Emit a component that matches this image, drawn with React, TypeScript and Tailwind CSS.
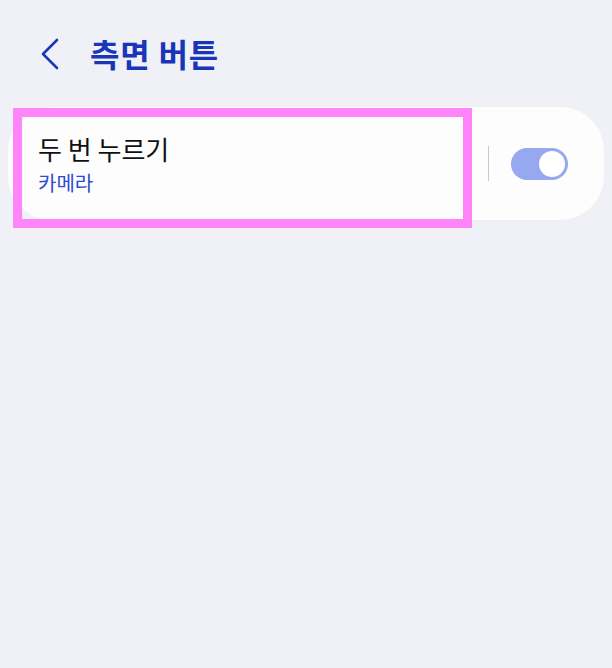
export default function App() {
  return (
    <div
      className="relative min-h-[668px] w-full bg-[#f0f1f6]"
      style={{ fontFamily: '"Noto Sans CJK KR", "Noto Sans", sans-serif' }}
    >
      {/* header */}
      <div className="flex h-[107px] items-center pb-[1px] pl-[40px]">
        <svg width="20" height="32" viewBox="0 0 20 32" fill="none" className="mt-[2px]">
          <path d="M17 2 L3 16 L17 30" stroke="#1a36b8" strokeWidth="2.6" strokeLinecap="round" strokeLinejoin="round" />
        </svg>
        <h1 className="ml-[30px] text-[32px] font-bold leading-none tracking-[0.8px] text-[#1a36b8]">측면 버튼</h1>
      </div>

      {/* card */}
      <div className="mx-2 flex h-[113px] items-center rounded-[44px] bg-[#fdfdfd] pl-[30px] pr-[36px]">
        <div className="flex flex-1 flex-col pt-[2px]">
          <span className="text-[26px] leading-[30px] text-[#111]">두 번 누르기</span>
          <span className="mt-[7px] text-[20px] leading-[24px] text-[#2b4bd2]">카메라</span>
        </div>
        <div className="h-[35px] w-px bg-[#c9c9ce]" />
        <div className="ml-[22px] flex h-[32px] w-[57px] items-center justify-end rounded-full bg-[#95a8f0] pr-[3px]">
          <div className="h-[26px] w-[26px] rounded-full bg-white" />
        </div>
      </div>

      {/* highlight overlay */}
      <div className="pointer-events-none absolute left-[13px] top-[108px] h-[120px] w-[459px] border-[9px] border-[#ff84fa]" />
    </div>
  );
}
